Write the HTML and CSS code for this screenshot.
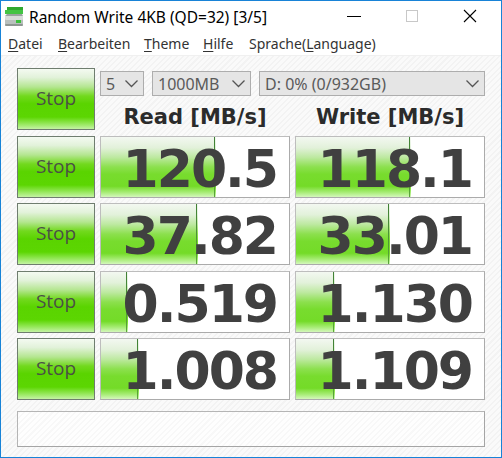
FILE: index.html
```html
<!DOCTYPE html>
<html>
<head>
<meta charset="utf-8">
<link rel="stylesheet" href="styles.css">
</head>
<body>
<div class="window">
  <div class="titlebar">
    <svg class="appicon" width="20" height="20" viewBox="0 0 20 20">
      <path d="M3 0 H19 V3 H3 Z" fill="#2fa82f"/>
      <path d="M1 3 H19 V7 H1 Z" fill="#44c444"/>
      <path d="M3 7 H18 L19 9 H1 Z" fill="#9aa4a0"/>
      <rect x="1" y="9" width="18" height="10" rx="2" fill="#b9c0bd"/>
      <rect x="1" y="9" width="18" height="4" rx="1" fill="#d8dcda"/>
      <rect x="12" y="13" width="5" height="3" fill="#3cbf3c"/>
      <rect x="1" y="17" width="18" height="2" rx="1" fill="#8e9692"/>
    </svg>
    <div class="title">Random Write 4KB (QD=32) [3/5]</div>
    <div class="controls">
      <div class="ctl"><svg width="14" height="14" viewBox="0 0 14 14"><path d="M0 7.5 H14" stroke="#000" stroke-width="1"/></svg></div>
      <div class="ctl"><svg width="14" height="14" viewBox="0 0 14 14"><rect x="1.5" y="1.5" width="11" height="11" fill="none" stroke="#c8c8c8" stroke-width="1"/></svg></div>
      <div class="ctl"><svg width="14" height="14" viewBox="0 0 14 14"><path d="M1 1 L13 13 M13 1 L1 13" stroke="#000" stroke-width="1.1"/></svg></div>
    </div>
  </div>
  <div class="menubar">
    <span class="mi w1"><u>D</u>atei</span>
    <span class="mi w2"><u>B</u>earbeiten</span>
    <span class="mi w3"><u>T</u>heme</span>
    <span class="mi w4"><u>H</u>ilfe</span>
    <span class="mi">Sprache(<u>L</u>anguage)</span>
  </div>
  <div class="content">
    <div class="grid">
      <div class="stop">Stop</div>
      <div class="topright">
        <div class="combos">
          <div class="combo c1"><span>5</span><svg class="chev" width="13" height="8" viewBox="0 0 13 8"><path d="M0.5 0.5 L6.5 6.5 L12.5 0.5" fill="none" stroke="#555" stroke-width="1.3"/></svg></div>
          <div class="combo c2"><span>1000MB</span><svg class="chev" width="13" height="8" viewBox="0 0 13 8"><path d="M0.5 0.5 L6.5 6.5 L12.5 0.5" fill="none" stroke="#555" stroke-width="1.3"/></svg></div>
          <div class="combo c3"><span>D: 0% (0/932GB)</span><svg class="chev" width="13" height="8" viewBox="0 0 13 8"><path d="M0.5 0.5 L6.5 6.5 L12.5 0.5" fill="none" stroke="#555" stroke-width="1.3"/></svg></div>
        </div>
        <div class="heads">
          <div class="head">Read [MB/s]</div>
          <div class="head">Write [MB/s]</div>
        </div>
      </div>

      <div class="stop">Stop</div>
      <div class="val" style="--w:115px">120.5</div>
      <div class="val" style="--w:115px">118.1</div>

      <div class="stop">Stop</div>
      <div class="val" style="--w:97px">37.82</div>
      <div class="val" style="--w:94px">33.01</div>

      <div class="stop">Stop</div>
      <div class="val" style="--w:27px">0.519</div>
      <div class="val" style="--w:39px">1.130</div>

      <div class="stop">Stop</div>
      <div class="val" style="--w:38px">1.008</div>
      <div class="val" style="--w:39px">1.109</div>
    </div>
    <div class="comment"></div>
  </div>
</div>
</body>
</html>
```

FILE: styles.css
```css
* { box-sizing: border-box; }
html, body { margin: 0; padding: 0; }
body { width: 502px; height: 458px; overflow: hidden; background: #fff; }

.window {
  width: 502px;
  height: 458px;
  border: 1px solid #1883d7;
  display: flex;
  flex-direction: column;
  background: #fff;
}

.titlebar {
  height: 30px;
  display: flex;
  align-items: center;
  background: #fff;
  font-family: "Noto Sans", sans-serif;
}
.appicon { margin-left: 3px; margin-top: 2px; flex: none; }
.title {
  margin-left: 5px;
  font-size: 15.5px;
  color: #000;
  flex: 1;
  white-space: nowrap;
  margin-top: 2px;
}
.controls { display: flex; height: 100%; margin-right: 2px; }
.ctl {
  width: 58px;
  display: flex;
  align-items: center;
  justify-content: center;
}

.menubar {
  height: 24px;
  display: flex;
  align-items: center;
  padding-left: 7px;
  font-family: "Noto Sans", sans-serif;
  font-size: 14px;
  color: #333;
  background: #fff;
}
.mi { white-space: nowrap; }
.mi u { text-decoration-thickness: 1px; text-underline-offset: 2px; }
.w1 { width: 50px; }
.w2 { width: 86px; }
.w3 { width: 59px; }
.w4 { width: 46px; }

.content {
  flex: 1;
  padding: 12px 0 0 16px;
  background:
    repeating-linear-gradient(135deg, #f3f3f3 0 1.5px, #fafafa 1.5px 4px);
  border-top: 1px solid #f0f0f0;
}

.grid {
  display: grid;
  grid-template-columns: 78px 190px 190px;
  grid-auto-rows: 62px;
  column-gap: 5px;
  row-gap: 5.5px;
}

.stop {
  border: 1px solid #6f7d6f;
  background: linear-gradient(to bottom,
    #f4faf1 0%, #e2f2da 14%, #b4e690 30%, #72d91e 45%, #5ad400 58%, #5cd602 80%, #8ee64f 90%, #c4f3a4 100%);
  display: flex;
  align-items: center;
  justify-content: center;
  font-family: "Open Sans", sans-serif;
  font-size: 19px;
  color: #4a5046;
  padding-bottom: 2px;
}

.topright {
  grid-column: 2 / 4;
  display: flex;
  flex-direction: column;
}
.combos {
  display: flex;
  gap: 8px;
  margin-top: 3px;
  height: 25px;
}
.combo {
  height: 25px;
  border: 1px solid #adadad;
  background: #e5e5e5;
  display: flex;
  align-items: center;
  justify-content: space-between;
  padding: 0 5px 0 5px;
  font-family: "Noto Sans", sans-serif;
  font-size: 16px;
  color: #5a5a5a;
}
.c1 { width: 44px; }
.c2 { width: 99px; }
.c3 { width: 226px; }
.chev { flex: none; }

.heads {
  flex: 1;
  display: grid;
  grid-template-columns: 190px 190px;
  column-gap: 5px;
  align-items: end;
}
.head {
  text-align: center;
  font-family: "DejaVu Sans", sans-serif;
  font-weight: bold;
  font-size: 21px;
  color: #2b2b2b;
  line-height: 24px;
  padding-bottom: 1px;
}

.val {
  border: 1px solid #bdbdbd;
  border-right-color: #ababab;
  border-bottom-color: #ababab;
  background:
    linear-gradient(to bottom, #3f7f35, #5aa838) no-repeat calc(var(--w) - 2px) 0 / 1px 100%,
    linear-gradient(to bottom,
      #f3f8f1 0%, #e2f1da 18%, #bde9a0 34%, #8ce04e 50%, #78dc2e 62%, #74db28 82%, #a6ec74 92%, #d4f7bc 100%) no-repeat 0 0 / var(--w) 100%,
    #fff;
  display: flex;
  align-items: center;
  justify-content: flex-end;
  padding: 4px 12px 0 0;
  font-family: "DejaVu Sans", sans-serif;
  font-weight: bold;
  font-size: 52px;
  letter-spacing: -2px;
  color: #404040;
  line-height: 1;
}

.comment {
  margin-top: 11px;
  width: 468px;
  height: 36px;
  border: 1px solid #b5b5b5;
  border-right-color: #a5a5a5;
  border-bottom-color: #a5a5a5;
  background: repeating-linear-gradient(135deg, #f8f8f8 0 1.5px, #fefefe 1.5px 4px);
}
```
